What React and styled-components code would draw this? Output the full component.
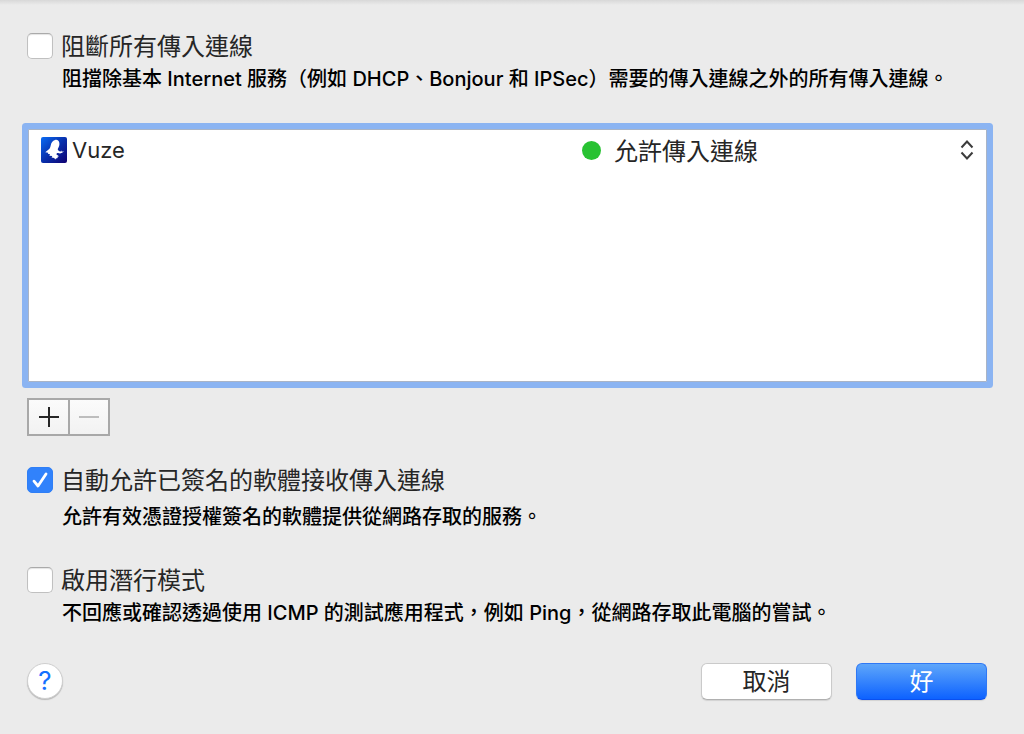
import React, { useState } from 'react';
import styled, { createGlobalStyle } from 'styled-components';

const GlobalStyle = createGlobalStyle`
  * {
    box-sizing: border-box;
  }

  body {
    margin: 0;
    background: #ebebeb;
    font-family: Inter, 'Noto Sans CJK TC', sans-serif;
    color: #262626;
  }

  button,
  select,
  input {
    font-family: inherit;
    margin: 0;
  }
`;

const Sheet = styled.form`
  min-height: 100vh;
  padding: 33px 37px 32px 27px;
  background: linear-gradient(#d8d8d8, #ebebeb 5px);
`;

const Option = styled.div`
  display: grid;
  grid-template-columns: 26px 1fr;
  column-gap: 8px;
  row-gap: ${({ $gap }) => $gap || 6}px;
  align-items: start;
`;

const OptionLabel = styled.label`
  font-size: 24px;
  line-height: 28px;
`;

const OptionHint = styled.p`
  grid-column: 2;
  margin: 0;
  padding-left: 1px;
  font-size: 20px;
  line-height: 24px;
  font-weight: 500;
  color: #000;
`;

const CheckMark = styled.svg`
  grid-area: 1 / 1;
  width: 26px;
  height: 26px;
  pointer-events: none;
  visibility: hidden;
`;

const CheckBox = styled.input`
  grid-area: 1 / 1;
  appearance: none;
  width: 26px;
  height: 26px;
  border: 1px solid #c0c0c0;
  border-top-color: #aaa;
  border-radius: 5px;
  background: #fff;
  box-shadow: inset 0 1px 1px #e4e4e4;

  &:checked {
    border-color: #2f7ff6;
    background: #3182fb;
    box-shadow: none;
  }

  &:checked + ${CheckMark} {
    visibility: visible;
  }
`;

const CheckCell = styled.span`
  display: grid;
`;

const AppList = styled.div`
  height: 253px;
  margin: 38px 0 16px 1px;
  border: 1px solid #a9b4c6;
  background: #fff;
  box-shadow: 0 0 0 6px #8bb4f2;
  border-radius: 1px;
`;

const AppTable = styled.table`
  width: 100%;
  table-layout: fixed;
  border-collapse: collapse;
  font-size: 24px;
  line-height: 32px;

  td {
    padding: 4px 12px 0;
  }

  td:last-child {
    width: 416px;
  }
`;

const AppName = styled.div`
  display: flex;
  align-items: center;
  gap: 5px;
  font-size: 22px;
`;

const Permission = styled.div`
  display: flex;
  align-items: center;
  gap: 13px;
`;

const StatusDot = styled.span`
  flex: none;
  width: 19px;
  height: 19px;
  border-radius: 50%;
  background: #28c232;
`;

const SelectWrap = styled.div`
  flex: 1;
  display: grid;
  align-items: center;
`;

const PermissionSelect = styled.select`
  grid-area: 1 / 1;
  appearance: none;
  width: 100%;
  height: 32px;
  padding: 2px 0 0;
  border: 0;
  outline: 0;
  background: transparent;
  font-size: 24px;
  color: #262626;
`;

const Chevrons = styled.svg`
  grid-area: 1 / 1;
  justify-self: end;
  pointer-events: none;
`;

const ListActions = styled.div`
  display: flex;
  width: max-content;
  margin-bottom: 31px;
  border: 2px solid #a8a8a8;
`;

const ListButton = styled.button`
  display: flex;
  align-items: center;
  justify-content: center;
  width: 39px;
  height: 34px;
  padding: 0;
  border: 0;
  background: linear-gradient(#fbfbfb, #f2f2f2);
  color: #262626;

  & + & {
    width: 40px;
    border-left: 2px solid #a8a8a8;
  }

  &:disabled {
    color: #bdbdbd;
  }
`;

const Spacer = styled.div`
  height: ${({ $size }) => $size}px;
`;

const Footer = styled.div`
  display: flex;
  align-items: flex-start;
  gap: 24px;
`;

const HelpButton = styled.button`
  width: 36px;
  height: 36px;
  margin-right: auto;
  padding: 0;
  border: 1px solid #cfcfcf;
  border-radius: 50%;
  background: #fff;
  box-shadow: 0 1px 1px #b8b8b8;
  font-size: 26px;
  line-height: 32px;
  color: #1470ff;
`;

const PushButton = styled.button`
  width: 131px;
  height: 37px;
  padding: 0;
  border: 1px solid ${({ $primary }) => ($primary ? '#2f78f5' : '#cacaca')};
  border-bottom-color: ${({ $primary }) => ($primary ? '#0a50f0' : '#b0b0b0')};
  border-radius: 6px;
  background: ${({ $primary }) =>
    $primary ? 'linear-gradient(#5ea6fa, #0d62ff)' : '#fff'};
  box-shadow: 0 1px 1px #d2d2d2;
  font-size: 24px;
  line-height: 34px;
  color: ${({ $primary }) => ($primary ? '#fff' : '#262626')};
`;

const VuzeIcon = () => (
  <svg width='26' height='26' viewBox='0 0 26 26' aria-hidden='true'>
    <defs>
      <linearGradient id='vuze' x1='0' y1='0' x2='1' y2='1'>
        <stop offset='0' stopColor='#0a6cf4' />
        <stop offset='0.5' stopColor='#0830ac' />
        <stop offset='1' stopColor='#100070' />
      </linearGradient>
    </defs>
    <rect width='26' height='26' rx='2' fill='url(#vuze)' />
    <path
      fill='#fff'
      d='M14 3c2-.7 3.700.3 4.200 2.200.6 2.300-.1 4.300-1.200 6.300-.4.800-.2 1.500.5 2.100l1.700 1.200 1.300-1.200.2 1.200 2.300-.5-1.900 1.400-2.100.8-2-.4c-1 0-1.700.6-1.500 1.400l2.500 1.700-1.500.6.2 1.300-1.700.3-.8 1-1-1.400-2.600-.6.7-1.300-3-.4.8-1.400-2.200-.6.3-1-2.900-.5 3.600-3c1.200-1.100 1.500-2.300 1.800-3.800.5-2.500 1.900-4.600 4.300-5.400z'
    />
  </svg>
);

const CheckOption = ({ id, label, hint, gap, defaultChecked }) => (
  <Option $gap={gap}>
    <CheckCell>
      <CheckBox
        type='checkbox'
        id={id}
        defaultChecked={defaultChecked}
        aria-describedby={`${id}-hint`}
      />
      <CheckMark viewBox='0 0 26 26' aria-hidden='true'>
        <path
          d='M7 14.200l4 4.800 8-12'
          fill='none'
          stroke='#fff'
          strokeWidth='2.800'
          strokeLinecap='round'
          strokeLinejoin='round'
        />
      </CheckMark>
    </CheckCell>
    <OptionLabel htmlFor={id}>{label}</OptionLabel>
    <OptionHint id={`${id}-hint`}>{hint}</OptionHint>
  </Option>
);

const App = () => {
  const [permission, setPermission] = useState('allow');

  return (
    <>
      <GlobalStyle />
      <Sheet onSubmit={(e) => e.preventDefault()}>
        <CheckOption
          id='block-all'
          label='阻斷所有傳入連線'
          hint='阻擋除基本 Internet 服務（例如 DHCP、Bonjour 和 IPSec）需要的傳入連線之外的所有傳入連線。'
        />

        <AppList>
          <AppTable>
            <tbody>
              <tr>
                <td>
                  <AppName>
                    <VuzeIcon />
                    Vuze
                  </AppName>
                </td>
                <td>
                  <Permission>
                    <StatusDot />
                    <SelectWrap>
                      <PermissionSelect
                        aria-label='Vuze'
                        value={permission}
                        onChange={(e) => setPermission(e.target.value)}
                      >
                        <option value='allow'>允許傳入連線</option>
                        <option value='block'>阻斷傳入連線</option>
                      </PermissionSelect>
                      <Chevrons width='14' height='20' viewBox='0 0 14 20'>
                        <path
                          d='M1.500 7.500l5.500-6 5.500 6M1.500 12.500l5.500 6 5.500-6'
                          fill='none'
                          stroke='#3c3c3c'
                          strokeWidth='2'
                        />
                      </Chevrons>
                    </SelectWrap>
                  </Permission>
                </td>
              </tr>
            </tbody>
          </AppTable>
        </AppList>

        {/* 新增 / 移除 */}
        <ListActions>
          <ListButton type='button' aria-label='新增'>
            <svg width='22' height='22' viewBox='0 0 22 22'>
              <path d='M1 11h20M11 1v20' stroke='currentColor' strokeWidth='2' />
            </svg>
          </ListButton>
          <ListButton type='button' aria-label='移除' disabled>
            <svg width='22' height='22' viewBox='0 0 22 22'>
              <path d='M1 11h20' stroke='currentColor' strokeWidth='2' />
            </svg>
          </ListButton>
        </ListActions>

        <CheckOption
          id='allow-signed'
          label='自動允許已簽名的軟體接收傳入連線'
          hint='允許有效憑證授權簽名的軟體提供從網路存取的服務。'
          gap={10}
          defaultChecked
        />
        <Spacer $size={38} />
        <CheckOption
          id='stealth'
          label='啟用潛行模式'
          hint='不回應或確認透過使用 ICMP 的測試應用程式，例如 Ping，從網路存取此電腦的嘗試。'
        />
        <Spacer $size={38} />

        <Footer>
          <HelpButton type='button' aria-label='輔助說明'>
            ?
          </HelpButton>
          <PushButton type='button'>取消</PushButton>
          <PushButton type='submit' $primary>
            好
          </PushButton>
        </Footer>
      </Sheet>
    </>
  );
};

export default App;
